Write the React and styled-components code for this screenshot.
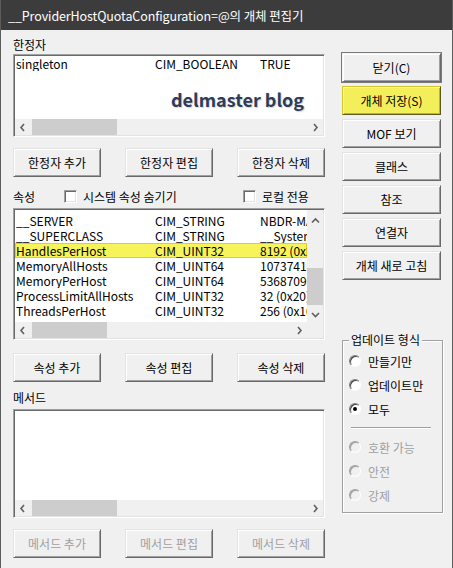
import React from "react";
import styled, { createGlobalStyle, css } from "styled-components";

const GlobalStyle = createGlobalStyle`
  * { box-sizing: border-box; }
  body {
    margin: 0;
    background: #f0f0f0;
    font-family: "Noto Sans CJK KR", "Noto Sans", sans-serif;
    font-size: 12px;
    color: #000;
  }
`;

const Window = styled.div`
  width: 453px;
  height: 568px;
  display: flex;
  flex-direction: column;
  background: #f0f0f0;
  border-left: 1px solid #5c5c5c;
  border-right: 1px solid #5c5c5c;
  overflow: hidden;
`;

const TitleBar = styled.div`
  height: 30px;
  flex: none;
  display: flex;
  align-items: center;
  padding-left: 7px;
  background: #3c3c3c;
  color: #fff;
  font-size: 12.5px;
  letter-spacing: -0.1px;
  white-space: nowrap;
`;

const Body = styled.div`
  display: flex;
  padding: 7px 0 0 12px;
`;

const LeftCol = styled.div`
  width: 312px;
  display: flex;
  flex-direction: column;
`;

const RightCol = styled.div`
  width: 102px;
  margin-left: 17px;
  padding-top: 16px;
  display: flex;
  flex-direction: column;
`;

const Label = styled.div`
  height: 16px;
  line-height: 16px;
  margin-top: ${(p) => p.$mt || 0}px;
`;

const ListBox = styled.div`
  height: ${(p) => p.$h}px;
  margin-top: ${(p) => p.$mt || 0}px;
  display: grid;
  grid-template-columns: ${(p) => (p.$vscroll ? "1fr 16px" : "1fr")};
  grid-template-rows: 1fr 16px;
  background: #fff;
  border: 1px solid;
  border-color: #a0a0a0 #fff #fff #a0a0a0;
  box-shadow: inset 1px 1px #696969, inset -1px -1px #e3e3e3;
  padding: 1px;
  overflow: hidden;
`;

const ListContent = styled.div`
  position: relative;
  overflow: hidden;
  padding-top: ${(p) => p.$pt || 0}px;
`;

const Row = styled.div`
  display: grid;
  grid-template-columns: 139px 105px 1fr;
  height: 15px;
  line-height: 15px;
  padding-left: 1px;
  white-space: nowrap;
  overflow: hidden;
  ${(p) =>
    p.$marked &&
    css`
      background: #f7f35a;
      box-shadow: inset 0 0 0 1px #e2cf1a;
    `}
`;

const Watermark = styled.div`
  position: absolute;
  left: 156px;
  top: 32px;
  font-family: "Noto Sans CJK KR", "Open Sans", sans-serif;
  font-weight: 700;
  font-size: 18px;
  line-height: 22px;
  color: #2e3d55;
  text-shadow: 1px 1px 1px rgba(120, 130, 150, 0.35);
`;

const HTrack = styled.div`
  position: relative;
  background: #f0f0f0;
  display: flex;
  align-items: center;
  justify-content: space-between;
  padding: 0 4px;
`;

const VTrack = styled.div`
  position: relative;
  background: #f0f0f0;
  display: flex;
  flex-direction: column;
  align-items: center;
  justify-content: space-between;
  padding: 7px 0 4px;
`;

const Corner = styled.div`
  background: #f0f0f0;
`;

const Thumb = styled.div`
  position: absolute;
  background: #cdcdcd;
`;

const Chevron = ({ dir }) => {
  const d = {
    left: "M5 1 L2 4.5 L5 8",
    right: "M2 1 L5 4.5 L2 8",
    up: "M1 5.5 L4.5 2 L8 5.5",
    down: "M1 3 L4.5 6.5 L8 3",
  }[dir];
  const horiz = dir === "left" || dir === "right";
  return (
    <svg width={horiz ? 7 : 9} height={horiz ? 9 : 8} viewBox={horiz ? "0 0 7 9" : "0 0 9 8"}>
      <path d={d} fill="none" stroke="#606060" strokeWidth="1.6" />
    </svg>
  );
};

const HScroll = ({ thumb }) => (
  <HTrack>
    <Chevron dir="left" />
    <Thumb style={{ left: 17, width: thumb, top: 0, bottom: 0 }} />
    <Chevron dir="right" />
  </HTrack>
);

const VScroll = ({ top, size }) => (
  <VTrack>
    <Chevron dir="up" />
    <Thumb style={{ top, height: size, left: 0, right: 0 }} />
    <Chevron dir="down" />
  </VTrack>
);

const ButtonRow = styled.div`
  display: flex;
  justify-content: space-between;
  margin-top: ${(p) => p.$mt}px;
`;

const Button = styled.button`
  width: ${(p) => p.$w}px;
  height: 29px;
  margin-top: ${(p) => p.$mt || 0}px;
  padding: 0;
  font-family: inherit;
  font-size: 12px;
  color: ${(p) => (p.disabled ? "#a0a0a0" : "#000")};
  background: ${(p) => (p.$marked ? "#f3ef5a" : "#f0f0f0")};
  border: 1px solid;
  border-color: ${(p) =>
    p.$marked ? "#d4c62a #5c5a20 #5c5a20 #d4c62a" : "#e3e3e3 #696969 #696969 #e3e3e3"};
  box-shadow: ${(p) =>
    p.$default
      ? "0 0 0 1px #7a7a7a, inset 1px 1px #fff, inset -1px -1px #a0a0a0"
      : p.$marked
      ? "inset 1px 1px #fbf88a, inset -1px -1px #bdb43a"
      : "inset 1px 1px #fff, inset -1px -1px #a0a0a0"};
  ${(p) => p.$default && "border-color: #f4f4f4 #696969 #696969 #f4f4f4;"}
`;

const LabelRow = styled.div`
  display: grid;
  grid-template-columns: 51px 179px 1fr;
  align-items: center;
  height: 17px;
  margin-top: 11px;
`;

const CheckItem = styled.label`
  display: flex;
  align-items: center;
  gap: 6px;
`;

const CheckBox = styled.span`
  width: 13px;
  height: 13px;
  background: #fff;
  border: 1px solid;
  border-color: #a0a0a0 #fff #fff #a0a0a0;
  box-shadow: inset 1px 1px #696969, inset -1px -1px #e3e3e3;
`;

const Group = styled.div`
  position: relative;
  width: 101px;
  height: 173px;
  margin-top: 60px;
  border: 1px solid #a0a0a0;
  box-shadow: inset 1px 1px #fff, 1px 1px #fff;
  padding-top: 8px;
`;

const Legend = styled.span`
  position: absolute;
  top: -9px;
  left: 6px;
  padding: 0 2px;
  line-height: 16px;
  background: #f0f0f0;
`;

const RadioRow = styled.div`
  display: flex;
  align-items: center;
  gap: 7px;
  height: 24px;
  padding-left: 6px;
  color: ${(p) => (p.$disabled ? "#a0a0a0" : "#000")};
`;

const RadioDot = styled.span`
  position: relative;
  width: 12px;
  height: 12px;
  border-radius: 50%;
  border: 1px solid;
  border-color: ${(p) => (p.$disabled ? "#a0a0a0 #fff #fff #a0a0a0" : "#808080 #fff #fff #808080")};
  background: ${(p) => (p.$disabled ? "#f0f0f0" : "#fff")};
  box-shadow: inset 1px 1px ${(p) => (p.$disabled ? "#a0a0a0" : "#404040")};
  ${(p) =>
    p.$checked &&
    css`
      &::after {
        content: "";
        position: absolute;
        left: 3px;
        top: 3px;
        width: 4px;
        height: 4px;
        border-radius: 50%;
        background: #000;
      }
    `}
`;

const Separator = styled.div`
  width: 80px;
  margin: 6px 0 6px 8px;
  height: 2px;
  border-top: 1px solid #a0a0a0;
  border-bottom: 1px solid #fff;
`;

const properties = [
  ["__SERVER", "CIM_STRING", "NBDR-MAIN"],
  ["__SUPERCLASS", "CIM_STRING", "__SystemClass"],
  ["HandlesPerHost", "CIM_UINT32", "8192 (0x2000)", true],
  ["MemoryAllHosts", "CIM_UINT64", "1073741824"],
  ["MemoryPerHost", "CIM_UINT64", "536870912"],
  ["ProcessLimitAllHosts", "CIM_UINT32", "32 (0x20)"],
  ["ThreadsPerHost", "CIM_UINT32", "256 (0x100)"],
];

const sideButtons = ["닫기(C)", "개체 저장(S)", "MOF 보기", "클래스", "참조", "연결자", "개체 새로 고침"];

const radios = [
  { label: "만들기만" },
  { label: "업데이트만" },
  { label: "모두", checked: true },
];

const disabledRadios = ["호환 가능", "안전", "강제"];

export default function App() {
  return (
    <>
      <GlobalStyle />
      <Window>
        <TitleBar>__ProviderHostQuotaConfiguration=@의 개체 편집기</TitleBar>
        <Body>
          <LeftCol>
            <Label>한정자</Label>
            <ListBox $h={83} $mt={1}>
              <ListContent>
                <Row>
                  <span>singleton</span>
                  <span>CIM_BOOLEAN</span>
                  <span>TRUE</span>
                </Row>
                <Watermark>delmaster blog</Watermark>
              </ListContent>
              <HScroll thumb={85} />
            </ListBox>
            <ButtonRow $mt={11}>
              <Button $w={88}>한정자 추가</Button>
              <Button $w={88}>한정자 편집</Button>
              <Button $w={88}>한정자 삭제</Button>
            </ButtonRow>

            <LabelRow>
              <span>속성</span>
              <CheckItem>
                <CheckBox />
                시스템 속성 숨기기
              </CheckItem>
              <CheckItem>
                <CheckBox />
                로컬 전용
              </CheckItem>
            </LabelRow>
            <ListBox $h={132} $mt={3} $vscroll>
              <ListContent $pt={3}>
                {properties.map(([name, type, value, marked]) => (
                  <Row key={name} $marked={marked}>
                    <span>{name}</span>
                    <span>{type}</span>
                    <span>{value}</span>
                  </Row>
                ))}
              </ListContent>
              <VScroll top={58} size={37} />
              <HScroll thumb={75} />
              <Corner />
            </ListBox>
            <ButtonRow $mt={13}>
              <Button $w={88}>속성 추가</Button>
              <Button $w={88}>속성 편집</Button>
              <Button $w={88}>속성 삭제</Button>
            </ButtonRow>

            <Label $mt={8}>메서드</Label>
            <ListBox $h={109} $mt={3}>
              <ListContent />
              <HScroll thumb={85} />
            </ListBox>
            <ButtonRow $mt={11}>
              <Button $w={88} disabled>메서드 추가</Button>
              <Button $w={88} disabled>메서드 편집</Button>
              <Button $w={88} disabled>메서드 삭제</Button>
            </ButtonRow>
          </LeftCol>

          <RightCol>
            {sideButtons.map((text, i) => (
              <Button
                key={text}
                $w={99}
                $mt={i === 0 ? 0 : 4}
                $default={i === 0}
                $marked={i === 1}
              >
                {text}
              </Button>
            ))}
            <Group>
              <Legend>업데이트 형식</Legend>
              {radios.map((r) => (
                <RadioRow key={r.label}>
                  <RadioDot $checked={r.checked} />
                  {r.label}
                </RadioRow>
              ))}
              <Separator />
              {disabledRadios.map((label) => (
                <RadioRow key={label} $disabled>
                  <RadioDot $disabled />
                  {label}
                </RadioRow>
              ))}
            </Group>
          </RightCol>
        </Body>
      </Window>
    </>
  );
}
